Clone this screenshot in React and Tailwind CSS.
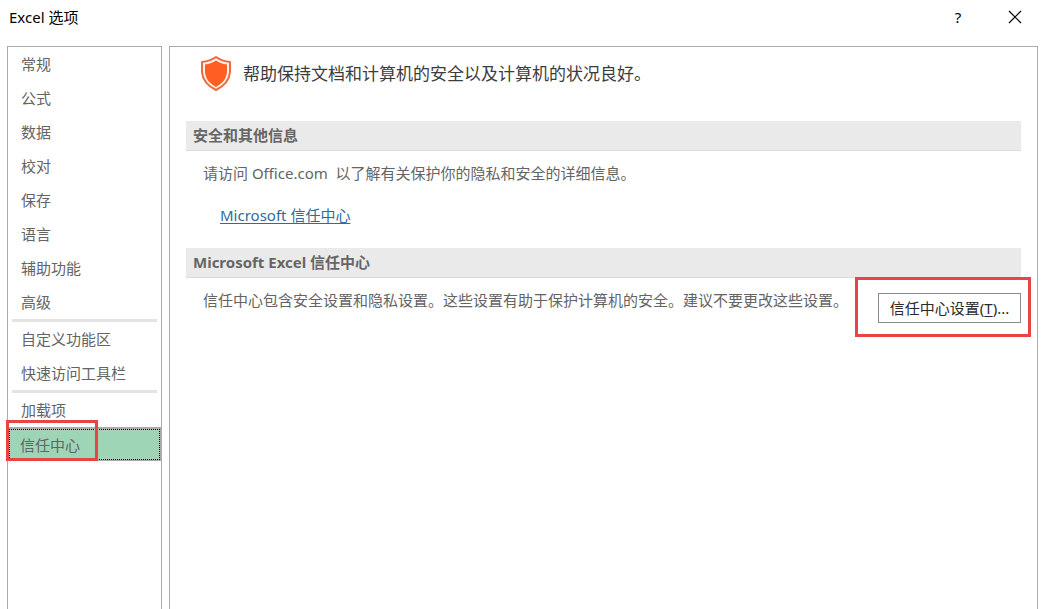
const menuGroups = [
  ['常规', '公式', '数据', '校对', '保存', '语言', '辅助功能', '高级'],
  ['自定义功能区', '快速访问工具栏'],
  ['加载项', '信任中心'],
];

const selected = '信任中心';

export default function App() {
  return (
    <div className="flex min-h-screen flex-col bg-white font-['Noto_Sans','Noto_Sans_CJK_SC',sans-serif] text-[15px] leading-5 text-[#646464]">
      <header className="flex h-[46px] items-start justify-between pt-[7px] pr-5 pl-[9px] text-black">
        <h1>Excel 选项</h1>
        <div className="flex items-center gap-[43px]">
          <button type="button" aria-label="帮助" className="h-5 w-3">
            ?
          </button>
          <button type="button" aria-label="关闭" className="flex h-5 w-4 items-center justify-center">
            <svg width="14" height="14" viewBox="0 0 14 14" stroke="currentColor" strokeWidth="1.2">
              <path d="M1 1l12 12M13 1L1 13" />
            </svg>
          </button>
        </div>
      </header>

      <div className="flex flex-1 gap-[7px] pr-[5px] pl-[7px]">
        <nav className="w-[155px] shrink-0 border border-b-0 border-[#ababab]">
          {menuGroups.map((group, index) => (
            <div key={group[0]}>
              {index > 0 && <hr className="mx-1 h-[3px] border-0 bg-[#e3e3e3]" />}
              {group.map((label) => (
                <MenuItem key={label} label={label} active={label === selected} />
              ))}
            </div>
          ))}
        </nav>

        <main className="min-w-0 flex-1 border border-b-0 border-[#ababab] px-4">
          <div className="flex h-[74px] items-start gap-[11px] pt-2 pl-[14px] text-[#3c3c3c]">
            <ShieldIcon />
            <p className="pt-[9px] text-[17px]">帮助保持文档和计算机的安全以及计算机的状况良好。</p>
          </div>

          <section>
            <SectionTitle>安全和其他信息</SectionTitle>
            <p className="mt-3 pl-[17px]">请访问 Office.com&nbsp; 以了解有关保护你的隐私和安全的详细信息。</p>
            <p className="mt-[22px] mb-[23px] pl-[34px]">
              <a href="#trust" className="text-[#2f6b9c] underline underline-offset-2">
                Microsoft 信任中心
              </a>
            </p>
          </section>

          <section>
            <SectionTitle>Microsoft Excel 信任中心</SectionTitle>
            <div className="flex items-start justify-between pl-[17px]">
              <p className="mt-3">信任中心包含安全设置和隐私设置。这些设置有助于保护计算机的安全。建议不要更改这些设置。</p>
              <div className="relative mt-[15px] shrink-0">
                <button
                  type="button"
                  className="h-[30px] w-[143px] border border-[#8c8c8c] bg-white whitespace-nowrap text-[#2b2b2b]"
                >
                  信任中心设置(<span className="underline underline-offset-2">T</span>)...
                </button>
                <span className="pointer-events-none absolute -top-4 -right-[10px] -bottom-[14px] -left-[23px] border-3 border-[#e84444]" />
              </div>
            </div>
          </section>
        </main>
      </div>
    </div>
  );
}

function MenuItem({ label, active }) {
  if (!active) {
    return (
      <button type="button" className="block h-[34px] w-full pl-[13px] text-left">
        {label}
      </button>
    );
  }
  return (
    <div className="relative bg-[#ababab] pt-[2px] pr-px pb-px pl-px">
      <button
        type="button"
        aria-current="page"
        className="block h-[31px] w-full border border-dotted border-black bg-[#9fd5b7] pl-[10px] text-left"
      >
        {label}
      </button>
      <span className="pointer-events-none absolute -top-[7px] bottom-0 -left-[2px] w-[92px] border-3 border-[#e84444]" />
    </div>
  );
}

function SectionTitle({ children }) {
  return (
    <h2 className="h-[30px] border-b border-[#dcdcdc] bg-[#eaeaea] pt-1 pl-[7px] font-bold text-[#666]">
      {children}
    </h2>
  );
}

function ShieldIcon() {
  return (
    <svg width="32" height="36" viewBox="0 0 32 36" className="shrink-0">
      <path
        d="M16 2C12.500 4.500 7.500 6.500 2 7V17C2.500 24.500 8 31 16 35C24 31 29.500 24.500 30 17V7C24.500 6.500 19.500 4.500 16 2Z"
        fill="#fff3ea"
        stroke="#ee6a3e"
        strokeWidth="2"
        strokeLinejoin="round"
      />
      <path
        d="M16 5.500C12.500 8 9 9 5 9.500V17C5.500 23.500 9.500 28.500 16 32C22.500 28.500 26.500 23.500 27 17V9.500C23 9 19.500 8 16 5.500Z"
        fill="#ff5f22"
      />
    </svg>
  );
}
